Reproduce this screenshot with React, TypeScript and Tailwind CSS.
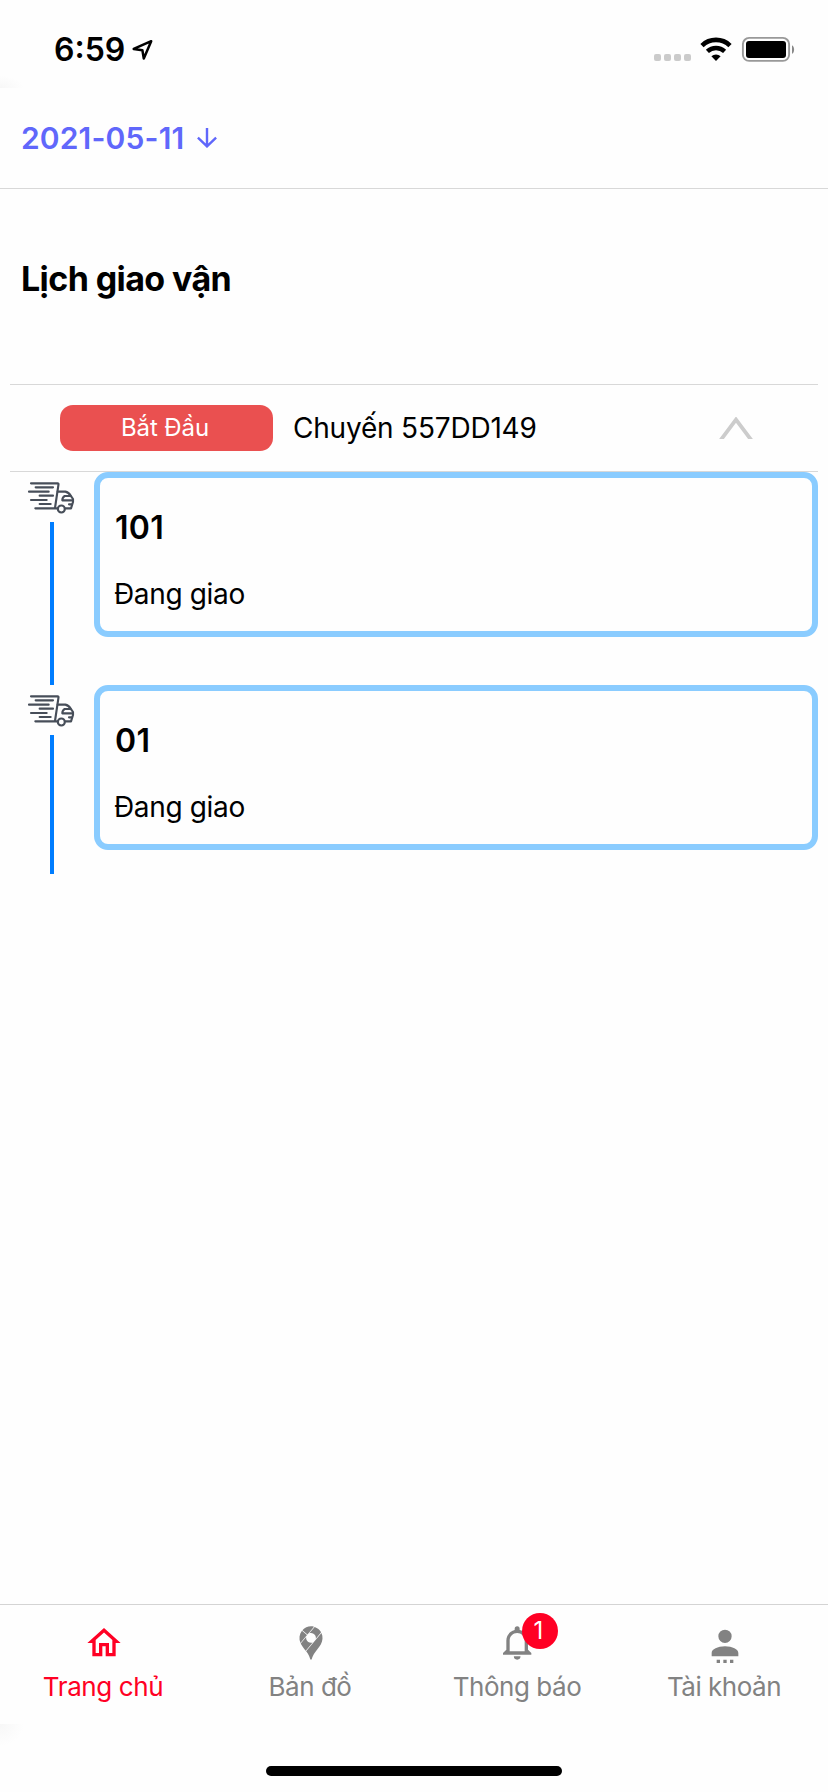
import React from 'react';

const PATHS = {
  home: 'M12 5.69L17 10.19V18H15V12H9V18H7V10.19L12 5.69M12 3L2 12H5V20H11V14H13V20H19V12H22',
  map: 'M18.27 6C19.28 8.17 19.05 10.73 17.94 12.81C17 14.5 15.65 15.93 14.5 17.5C14 18.2 13.5 18.95 13.13 19.76C13 20.03 12.91 20.31 12.81 20.59C12.71 20.87 12.62 21.15 12.53 21.43C12.44 21.69 12.33 22 12 22C11.61 22 11.5 21.56 11.42 21.26C11.18 20.53 10.94 19.83 10.57 19.16C10.15 18.37 9.62 17.64 9.08 16.93L18.27 6M9.12 8.42L5.82 12.34C6.43 13.63 7.34 14.73 8.21 15.83C8.42 16.08 8.63 16.34 8.83 16.61L13 11.67L12.96 11.68C11.5 12.18 9.88 11.44 9.3 10C9.22 9.83 9.16 9.63 9.12 9.43C9.06 9.1 9.06 8.74 9.12 8.42M6.58 4.62L6.57 4.63C4.95 6.68 4.67 9.53 5.64 11.94L9.63 7.2L9.58 7.15L6.58 4.62M14.22 2.36L11 6.17L11.04 6.16C12.38 5.7 13.88 6.28 14.56 7.5C14.71 7.78 14.83 8.08 14.87 8.38C14.93 8.76 14.95 9.03 14.88 9.4L14.88 9.41L18.08 5.61C17.24 4.09 15.87 2.93 14.23 2.37L14.22 2.36M9.89 6.89L13.8 2.24L13.76 2.23C13.18 2.08 12.59 2 12 2C10.03 2 8.17 2.85 6.85 4.31L6.83 4.32L9.89 6.89Z',
  bell: 'M16 17H7V10.5C7 8 9 6 11.5 6C14 6 16 8 16 10.5M18 16V10.5C18 7.43 15.86 4.86 13 4.18V3.5A1.5 1.5 0 0 0 11.5 2A1.5 1.5 0 0 0 10 3.5V4.18C7.13 4.86 5 7.43 5 10.5V16L3 18V19H20V18M11.5 22A2 2 0 0 0 13.5 20H9.5A2 2 0 0 0 11.5 22Z',
  account:
    'M12 4A4 4 0 0 1 16 8A4 4 0 0 1 12 12A4 4 0 0 1 8 8A4 4 0 0 1 12 4M12 14C16.42 14 20 15.79 20 18V20H4V18C4 15.79 7.58 14 12 14M7 22H9V24H7V22M11 22H13V24H11V22M15 22H17V24H15V22Z',
};

type Tab = { label: string; icon: keyof typeof PATHS; active?: boolean; badge?: number; tracking: string };

const TABS: Tab[] = [
  { label: 'Trang chủ', icon: 'home', active: true, tracking: 'tracking-[-0.4px]' },
  { label: 'Bản đồ', icon: 'map', tracking: 'tracking-[-0.5px]' },
  { label: 'Thông báo', icon: 'bell', badge: 1, tracking: 'tracking-[-0.45px]' },
  { label: 'Tài khoản', icon: 'account', tracking: 'tracking-[-0.5px]' },
];

const STOPS = [
  { id: '101', status: 'Đang giao', last: false },
  { id: '01', status: 'Đang giao', last: true },
];

function StatusBar() {
  return (
    <div className="flex h-[88px] items-start justify-between bg-[radial-gradient(24px_12px_at_0px_88px,#f7f7f7,transparent)] pr-[33px] pl-[54px]">
      <div className="flex h-[100px] items-center">
        <span className="w-[78px] text-[32px] leading-[40px] font-semibold whitespace-nowrap [font-feature-settings:'case']">6:59</span>
        <svg width="22" height="22" viewBox="0 0 22 22" fill="none" stroke="#000" strokeWidth="2.5" strokeLinejoin="round">
          <path d="M19.2 2.2L1.7 9.9L10.4 11.3L11.8 19.6Z" />
        </svg>
      </div>
      <div className="flex h-[98px] items-center">
        <div className="mt-[17px] mr-[9px] flex gap-[3px]">
          {[0, 1, 2, 3].map((i) => (
            <span key={i} className="h-[7px] w-[7px] rounded-[2px] bg-[#cbcbcb]" />
          ))}
        </div>
        <svg className="mr-[9px]" width="32" height="24" viewBox="0 0 32 24">
          <path d="M2 8.6A20 20 0 0 1 30 8.6" fill="none" stroke="#000" strokeWidth="4.6" />
          <path d="M7.4 14.4A12.4 12.4 0 0 1 24.6 14.4" fill="none" stroke="#000" strokeWidth="4.4" />
          <path d="M11.4 19.2A6.8 6.8 0 0 1 20.6 19.2L16 24Z" fill="#000" />
        </svg>
        <svg width="54" height="26" viewBox="0 0 54 26">
          <rect x="1.9" y="1.9" width="46.2" height="23" rx="6.2" fill="none" stroke="#999" strokeWidth="1.9" />
          <rect x="5" y="5" width="40" height="17" rx="3" />
          <path d="M51 9.2C53.8 10.4 53.8 16.600 51 17.8Z" fill="#888" />
        </svg>
      </div>
    </div>
  );
}

function Truck() {
  return (
    <svg
      className="mt-px ml-[17px] h-12 w-12"
      viewBox="21 9 144 144"
      fill="none"
      stroke="#474e59"
      strokeWidth="6.4"
      strokeLinecap="round"
      strokeLinejoin="round"
    >
      <path d="M33 40H113Q116 40 115.500 43L105 114" />
      <path d="M47 52H99M27 65H86M59 77H99M33 90H80M59 102H92M46 115H112" />
      <path d="M113 65H136Q146 67 152 77L159 87V96L153 115H137" />
      <path d="M152 78H134Q127 82 127 91H158M147 103H155" />
      <circle cx="124" cy="117" r="10.500" />
    </svg>
  );
}

function Stop({ id, status, last }: { id: string; status: string; last: boolean }) {
  return (
    <div className="flex h-[213px] items-start">
      <div className="flex h-full w-[84px] flex-col">
        <div className="h-[50px]">
          <Truck />
        </div>
        <div className={last ? 'ml-10 h-[139px] w-1 bg-[#007dff]' : 'ml-10 h-[163px] w-1 bg-[#007dff]'} />
      </div>
      <div className="h-[165px] flex-1 rounded-[14px] border-[6px] border-[#8accff] pt-[30px] pl-[14px]">
        <div className="pl-px text-[32px] leading-10 font-semibold tracking-[0.3px]">{id}</div>
        <div className="mt-[26px] text-[28px] leading-10 tracking-[-0.35px]">{status}</div>
      </div>
    </div>
  );
}

export default function App() {
  return (
    <div className="flex h-[1792px] w-[828px] flex-col overflow-hidden bg-[#fefefe] font-['Inter','Liberation_Sans',sans-serif] text-black">
      <StatusBar />
      <header className="flex h-[101px] items-center border-b border-[#d8d8d8] pl-[21px] text-[#6067fb]">
        <span className="w-[176px] text-[30px] leading-10 font-semibold tracking-[0.15px] whitespace-nowrap">2021-05-11</span>
        <svg width="20" height="20" viewBox="0 0 20 20" fill="none" stroke="currentColor" strokeWidth="2.4">
          <path d="M10 0V18.500M0.900 9.700L10 18.400L19.100 9.700" />
        </svg>
      </header>

      <main className="flex flex-1 flex-col px-[10px]">
        <h1 className="mt-[70px] h-[125px] pl-[11px] text-[34px] leading-10 font-bold tracking-[-0.6px]">Lịch giao vận</h1>
        <div className="flex h-[88px] items-center border-y border-[#d8d8d8] pl-[50px]">
          <button className="h-[46px] w-[213px] rounded-[13px] bg-[#ea5050] pr-[3px] text-[24px] leading-[46px] tracking-[-0.1px] text-white">
            Bắt Đầu
          </button>
          <span className="ml-[20px] flex-1 text-[28px] leading-10 tracking-[-0.2px]">Chuyến 557DD149</span>
          <svg className="mr-[65px]" width="34" height="22" viewBox="0 0 34 22" fill="none" stroke="#ccc" strokeWidth="3.8">
            <path d="M1 24L17 2.600L33 24" />
          </svg>
        </div>
        {STOPS.map((s) => (
          <Stop key={s.id} {...s} />
        ))}
      </main>

      <nav className="grid h-[120px] grid-cols-4 border-t border-[#d4d4d4]">
        {TABS.map((t) => (
          <div
            key={t.label}
            className={t.active ? 'flex flex-col items-center pt-[18px] text-[#ff0024]' : 'flex flex-col items-center pt-[18px] text-[#828282]'}
          >
            <div className="relative left-[0.5px] h-10 w-10">
              <svg className="h-10 w-10 overflow-visible" viewBox="0 0 24 24" fill="currentColor">
                <path d={PATHS[t.icon]} />
              </svg>
              {t.badge && (
                <span className="absolute -top-[10px] left-[24px] h-9 w-9 rounded-full bg-[#ff0024] pr-[3px] text-center text-[24px] leading-9 text-white">
                  {t.badge}
                </span>
              )}
            </div>
            <span className={`mt-1 pr-[1px] text-[26px] leading-10 whitespace-nowrap ${t.tracking}`}>{t.label}</span>
          </div>
        ))}
      </nav>
      <div className="flex h-[68px] justify-center bg-[radial-gradient(24px_22px_at_0px_0px,#f7f7f7,transparent)] pt-[42px]">
        <div className="h-[10px] w-[296px] rounded-full bg-black" />
      </div>
    </div>
  );
}
